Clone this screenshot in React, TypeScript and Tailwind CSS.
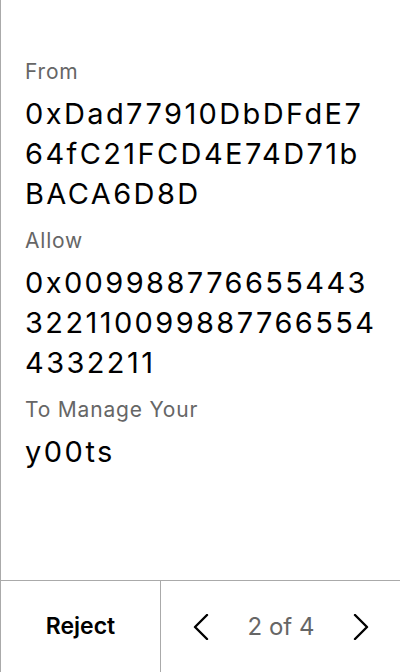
const font = { fontFamily: "Inter, 'Noto Sans', sans-serif" };

function Field({ label, lines }: { label: string; lines: string[] }) {
  return (
    <div className="flex flex-col">
      <div className="text-[21px] leading-[28px] tracking-[0.8px] text-[#666666]">{label}</div>
      <div className="mt-[8px] text-[29px] leading-[40px] tracking-[2.4px] text-black">
        {lines.map((l) => (
          <div key={l}>{l}</div>
        ))}
      </div>
    </div>
  );
}

function Chevron({ dir }: { dir: "left" | "right" }) {
  return (
    <svg width="16" height="26" viewBox="0 0 16 26" fill="none" stroke="black" strokeWidth="2.4" strokeLinecap="round" strokeLinejoin="round">
      {dir === "left" ? <polyline points="14,1 2,13 14,25" /> : <polyline points="2,1 14,13 2,25" />}
    </svg>
  );
}

export default function App() {
  return (
    <div className="w-[400px] h-[672px] bg-white flex flex-col border-l border-[#aaaaaa]" style={font}>
      <div className="flex-1 flex flex-col gap-[13px] px-[24px] pt-[58px]">
        <Field label="From" lines={["0xDad77910DbDFdE7", "64fC21FCD4E74D71b", "BACA6D8D"]} />
        <Field label="Allow" lines={["0x009988776655443", "322110099887766554", "4332211"]} />
        <Field label="To Manage Your" lines={["y00ts"]} />
      </div>
      <div className="h-[92px] flex border-t border-[#aaaaaa]">
        <button className="w-[160px] flex items-center justify-center text-[23px] font-semibold text-black border-r border-[#aaaaaa]">
          Reject
        </button>
        <div className="flex-1 flex items-center justify-between pl-[32px] pr-[31px]">
          <Chevron dir="left" />
          <span className="text-[24px] text-[#666666]">2 of 4</span>
          <Chevron dir="right" />
        </div>
      </div>
    </div>
  );
}
